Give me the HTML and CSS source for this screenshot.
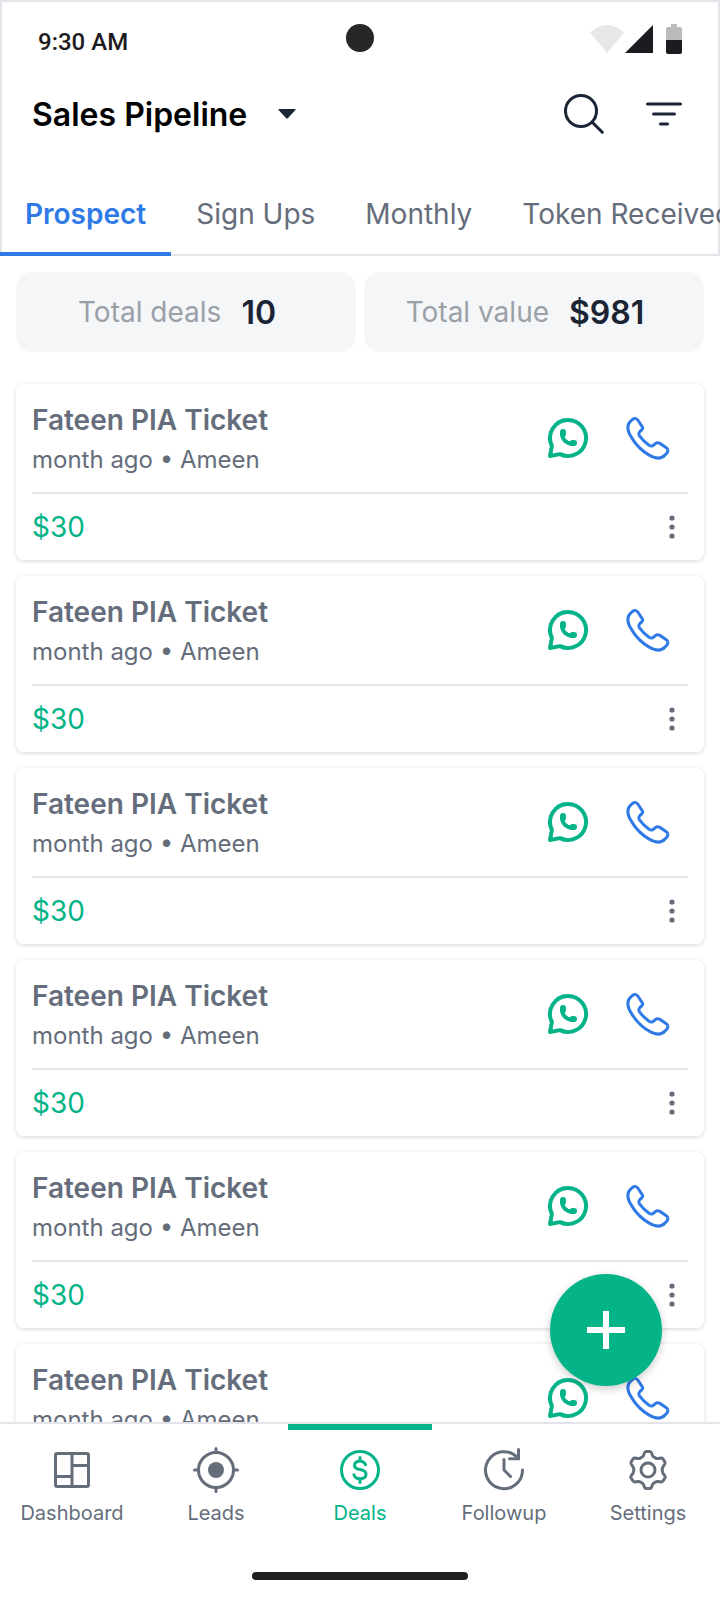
FILE: index.html
```html
<!DOCTYPE html>
<html lang="en">
<head>
    <meta charset="UTF-8">
    <meta name="viewport" content="width=device-width, initial-scale=1.0">
    <title>Sales Pipeline</title>
    <link rel="stylesheet" href="styles.css">
</head>
<body>
    <!-- Icons used more than once -->
    <svg class="sprite" aria-hidden="true">
        <symbol id="icon-whatsapp" viewBox="0 0 48 48">
            <path d="M24 6a18 18 0 1 1-8 34.100L6 42l1.900-10A18 18 0 0 1 24 6z" fill="none" stroke="currentColor" stroke-width="4" stroke-linejoin="round"/>
            <path d="M18 19C18 25.500 22.500 30 29 30" fill="none" stroke="currentColor" stroke-width="4" stroke-linecap="round"/>
            <path d="M19 18v2M28.500 29h1.500" fill="none" stroke="currentColor" stroke-width="6" stroke-linecap="round"/>
        </symbol>
        <symbol id="icon-phone" viewBox="0 0 48 48">
            <path d="M18.300 12.800L13.800 6Q11.400 3 8.500 5.500C3 9.500 2.500 14.500 6 21C11.500 31 18 37.500 27 42.200C33 45.300 38.500 44.500 42.500 39.500Q45.500 36 42 33.500L35.800 29.300Q33.300 28 31.300 29.600L29.700 31Q27.500 32.900 25 31.200Q19.100 26.800 15.500 21.800Q14.100 19.600 15.800 17.700L17.700 15.900Q19.300 14.500 18.300 12.800z" fill="none" stroke="currentColor" stroke-width="3" stroke-linejoin="round"/>
        </symbol>
        <symbol id="icon-dots" viewBox="0 0 8 24">
            <circle cx="4" cy="3" r="2.600" fill="currentColor"/>
            <circle cx="4" cy="12" r="2.600" fill="currentColor"/>
            <circle cx="4" cy="21" r="2.600" fill="currentColor"/>
        </symbol>
    </svg>

    <header class="top">
        <div class="status-bar">
            <span class="time">9:30 AM</span>
            <span class="camera"></span>
            <svg class="status-icons" width="92" height="30" viewBox="0 0 92 30" aria-hidden="true">
                <path d="M0 8.500Q17-6.500 34 8.500L17 29z" fill="#e7e7e7"/>
                <path d="M63 1v28H35z" fill="#1d1b20"/>
                <path d="M81 0h6v3h3q2 0 2 2v11H76V5q0-2 2-2h3z" fill="#bbb"/>
                <path d="M76 16h16v12q0 2-2 2H78q-2 0-2-2z" fill="#1d1b20"/>
            </svg>
        </div>

        <div class="title-bar">
            <div class="pipeline">
                <select class="pipeline-select" aria-label="Pipeline">
                    <option>Sales Pipeline</option>
                </select>
                <svg class="caret" width="18" height="10" viewBox="0 0 18 10" aria-hidden="true">
                    <path d="M1 0h16q1 0 .4 1L10 9q-1 1-2 0L.6 1Q0 0 1 0z" fill="currentColor"/>
                </svg>
            </div>
            <button class="icon-btn" aria-label="Search">
                <svg width="48" height="48" viewBox="0 0 48 48" fill="none" stroke="currentColor" stroke-width="3" stroke-linecap="round">
                    <circle cx="21" cy="21" r="15.500"/>
                    <path d="M32.500 32.500l9.800 9.800"/>
                </svg>
            </button>
            <button class="icon-btn" aria-label="Filter">
                <svg width="48" height="48" viewBox="0 0 48 48" fill="none" stroke="currentColor" stroke-width="3" stroke-linecap="round">
                    <path d="M7.500 14h33M13.500 24h21M20.500 34h7"/>
                </svg>
            </button>
        </div>

        <nav class="tabs">
            <a class="tab active" href="#prospect">Prospect</a>
            <a class="tab" href="#sign-ups">Sign Ups</a>
            <a class="tab" href="#monthly">Monthly</a>
            <a class="tab" href="#token-received">Token Received</a>
        </nav>
    </header>

    <main>
        <section class="totals">
            <div class="total"><span>Total deals</span><strong>10</strong></div>
            <div class="total"><span>Total value</span><strong>$981</strong></div>
        </section>

        <section class="deals">
            <article class="deal">
                <div class="deal-top">
                    <div class="deal-info">
                        <h2>Fateen PIA Ticket</h2>
                        <p>month ago • Ameen</p>
                    </div>
                    <a class="whatsapp" href="#whatsapp" aria-label="WhatsApp"><svg><use href="#icon-whatsapp"/></svg></a>
                    <a class="phone" href="#call" aria-label="Call"><svg><use href="#icon-phone"/></svg></a>
                </div>
                <div class="deal-bottom">
                    <span class="price">$30</span>
                    <button class="more" aria-label="More"><svg><use href="#icon-dots"/></svg></button>
                </div>
            </article>
            <article class="deal">
                <div class="deal-top">
                    <div class="deal-info">
                        <h2>Fateen PIA Ticket</h2>
                        <p>month ago • Ameen</p>
                    </div>
                    <a class="whatsapp" href="#whatsapp" aria-label="WhatsApp"><svg><use href="#icon-whatsapp"/></svg></a>
                    <a class="phone" href="#call" aria-label="Call"><svg><use href="#icon-phone"/></svg></a>
                </div>
                <div class="deal-bottom">
                    <span class="price">$30</span>
                    <button class="more" aria-label="More"><svg><use href="#icon-dots"/></svg></button>
                </div>
            </article>
            <article class="deal">
                <div class="deal-top">
                    <div class="deal-info">
                        <h2>Fateen PIA Ticket</h2>
                        <p>month ago • Ameen</p>
                    </div>
                    <a class="whatsapp" href="#whatsapp" aria-label="WhatsApp"><svg><use href="#icon-whatsapp"/></svg></a>
                    <a class="phone" href="#call" aria-label="Call"><svg><use href="#icon-phone"/></svg></a>
                </div>
                <div class="deal-bottom">
                    <span class="price">$30</span>
                    <button class="more" aria-label="More"><svg><use href="#icon-dots"/></svg></button>
                </div>
            </article>
            <article class="deal">
                <div class="deal-top">
                    <div class="deal-info">
                        <h2>Fateen PIA Ticket</h2>
                        <p>month ago • Ameen</p>
                    </div>
                    <a class="whatsapp" href="#whatsapp" aria-label="WhatsApp"><svg><use href="#icon-whatsapp"/></svg></a>
                    <a class="phone" href="#call" aria-label="Call"><svg><use href="#icon-phone"/></svg></a>
                </div>
                <div class="deal-bottom">
                    <span class="price">$30</span>
                    <button class="more" aria-label="More"><svg><use href="#icon-dots"/></svg></button>
                </div>
            </article>
            <article class="deal">
                <div class="deal-top">
                    <div class="deal-info">
                        <h2>Fateen PIA Ticket</h2>
                        <p>month ago • Ameen</p>
                    </div>
                    <a class="whatsapp" href="#whatsapp" aria-label="WhatsApp"><svg><use href="#icon-whatsapp"/></svg></a>
                    <a class="phone" href="#call" aria-label="Call"><svg><use href="#icon-phone"/></svg></a>
                </div>
                <div class="deal-bottom">
                    <span class="price">$30</span>
                    <button class="more" aria-label="More"><svg><use href="#icon-dots"/></svg></button>
                </div>
            </article>
            <article class="deal">
                <div class="deal-top">
                    <div class="deal-info">
                        <h2>Fateen PIA Ticket</h2>
                        <p>month ago • Ameen</p>
                    </div>
                    <a class="whatsapp" href="#whatsapp" aria-label="WhatsApp"><svg><use href="#icon-whatsapp"/></svg></a>
                    <a class="phone" href="#call" aria-label="Call"><svg><use href="#icon-phone"/></svg></a>
                </div>
                <div class="deal-bottom">
                    <span class="price">$30</span>
                    <button class="more" aria-label="More"><svg><use href="#icon-dots"/></svg></button>
                </div>
            </article>
        </section>
    </main>

    <footer class="bottom">
        <button class="fab" aria-label="Add deal">
            <svg width="38" height="38" viewBox="0 0 38 38" fill="none" stroke="currentColor" stroke-width="6">
                <path d="M19 0v38M0 19h38"/>
            </svg>
        </button>
        <nav class="bottom-nav">
            <a class="nav-item" href="#dashboard">
                <svg viewBox="0 0 48 48" fill="none" stroke="currentColor" stroke-width="3">
                    <rect x="7.500" y="7.500" width="33" height="33" rx="1.500"/>
                    <path d="M24 7v34M24 19.500h17M7 30.500h17"/>
                </svg>
                Dashboard
            </a>
            <a class="nav-item" href="#leads">
                <svg viewBox="0 0 48 48" fill="none" stroke="currentColor" stroke-width="3" stroke-linecap="round">
                    <circle cx="24" cy="24" r="17.500"/>
                    <circle cx="24" cy="24" r="8" fill="currentColor" stroke="none"/>
                    <path d="M24 2.500v4M24 41.500v4M2.500 24h4M41.500 24h4"/>
                </svg>
                Leads
            </a>
            <a class="nav-item active" href="#deals">
                <svg viewBox="0 0 48 48" fill="none" stroke="currentColor" stroke-width="3" stroke-linecap="round">
                    <circle cx="24" cy="24" r="18.500"/>
                    <path d="M29.500 18.800C28.700 16.300 26.800 15.200 24 15.200C20.600 15.200 18.500 16.900 18.500 19.400C18.500 25.500 30 21.500 30 28C30 31 27.500 32.700 24 32.700C20.800 32.700 18.700 31.500 18 28.800"/>
                    <path d="M24 11.500v3M24 33.500v3"/>
                </svg>
                Deals
            </a>
            <a class="nav-item" href="#followup">
                <svg viewBox="0 0 48 48" fill="none" stroke="currentColor" stroke-width="3" stroke-linecap="round">
                    <path d="M42.500 24A18.500 18.500 0 1 1 37 11"/>
                    <path d="M38.500 3.500v9.200H29.500M24 13.500V24l6.500 6.500"/>
                </svg>
                Followup
            </a>
            <a class="nav-item" href="#settings">
                <svg viewBox="0 0 48 48" fill="none" stroke="currentColor" stroke-width="3" stroke-linejoin="round">
                    <circle cx="24" cy="24" r="7"/>
                    <path d="M24 5.500H25.600Q27.100 5.500 27.600 7L28.400 9.200Q29.100 11 31.100 11.700Q32.800 12.900 34.500 12.500L37 12.100Q38.500 12 39.300 13.400L40.900 16Q41.600 17.400 40.600 18.600L39.200 20.300Q38.200 22 38.200 24Q38.200 26 39.200 27.700L40.600 29.400Q41.600 30.600 40.900 32L39.300 34.600Q38.500 36 37 35.900L34.500 35.500Q32.800 35.100 31.100 36.300Q29.100 37 28.400 38.800L27.600 41Q27.100 42.500 25.600 42.500H22.400Q20.900 42.500 20.400 41L19.600 38.800Q18.900 37 16.900 36.300Q15.200 35.100 13.500 35.500L11 35.900Q9.500 36 8.700 34.600L7.100 32Q6.400 30.600 7.400 29.400L8.800 27.700Q9.800 26 9.800 24Q9.800 22 8.800 20.300L7.400 18.600Q6.400 17.400 7.100 16L8.700 13.400Q9.500 12 11 12.100L13.500 12.500Q15.200 12.900 16.900 11.700Q18.900 11 19.600 9.200L20.400 7Q20.900 5.500 22.400 5.500z"/>
                </svg>
                Settings
            </a>
        </nav>
        <div class="home-indicator"></div>
    </footer>
</body>
</html>
```

FILE: styles.css
```css
* {
    box-sizing: border-box;
}

body {
    margin: 0;
    height: 100vh;
    display: flex;
    flex-direction: column;
    overflow: hidden;
    font-family: Inter, "Liberation Sans", sans-serif;
    color: #656d7b;
    background: #fff;
}

a {
    color: inherit;
    text-decoration: none;
}

button {
    padding: 0;
    border: none;
    background: none;
    color: inherit;
    cursor: pointer;
}

svg {
    display: block;
}

.sprite {
    position: absolute;
    width: 0;
    height: 0;
}

/* Header */
.top {
    border: 2px solid #e4e4ea;
}

.status-bar {
    display: grid;
    grid-template-columns: 1fr auto 1fr;
    align-items: center;
    height: 76px;
    padding: 0 36px 2px;
}

.time {
    font-family: Roboto, sans-serif;
    font-size: 24px;
    font-weight: 500;
    line-height: 28px;
    padding-top: 6px;
    color: #1d1b20;
}

.camera {
    width: 28px;
    height: 28px;
    margin-bottom: 2px;
    border-radius: 50%;
    background: #272728;
}

.status-icons {
    justify-self: end;
}

.title-bar {
    display: flex;
    align-items: center;
    gap: 32px;
    height: 72px;
    padding: 0 30px;
    color: #1a2434;
}

.pipeline {
    display: flex;
    align-items: center;
    margin-right: auto;
}

.pipeline-select {
    appearance: none;
    padding: 2px 50px 0 0;
    margin-right: -20px;
    border: none;
    background: none;
    font-family: inherit;
    font-size: 32px;
    font-weight: 600;
    line-height: 40px;
    color: #000;
}

.caret {
    pointer-events: none;
}

.icon-btn {
    width: 48px;
    height: 48px;
}

.tabs {
    display: flex;
    height: 106px;
    margin: 0 -2px -2px;
    overflow: hidden;
    align-items: flex-end;
}

.tab {
    padding: 0 25px 20px;
    border-bottom: 4px solid transparent;
    font-size: 28px;
    line-height: 36px;
    white-space: nowrap;
}

.tab.active {
    border-color: #2f7ae5;
    color: #2f7ae5;
    font-weight: 600;
}

/* Deals */
main {
    flex: 1;
    min-height: 0;
    padding: 16px;
    overflow: hidden;
}

.totals {
    display: grid;
    grid-template-columns: 1fr 1fr;
    gap: 8px;
    margin-bottom: 32px;
}

.total {
    display: flex;
    align-items: center;
    justify-content: center;
    gap: 20px;
    height: 80px;
    padding-right: 18px;
    border-radius: 16px;
    background: #f5f6f8;
    font-size: 28px;
    color: #9aa0a8;
}

.total strong {
    font-size: 32px;
    font-weight: 600;
    color: #1a2434;
}

.deals {
    display: flex;
    flex-direction: column;
    gap: 16px;
}

.deal {
    padding: 0 16px;
    border-radius: 8px;
    background: #fff;
    box-shadow: 0 1px 4px rgba(0, 0, 0, 0.16);
}

.deal-top {
    display: flex;
    align-items: center;
    gap: 32px;
    height: 110px;
    padding: 0 16px 0 0;
    border-bottom: 2px solid #e4e4ea;
}

.deal-info {
    flex: 1;
    padding-top: 4px;
}

.deal h2 {
    margin: 0;
    font-size: 28px;
    font-weight: 600;
    line-height: 40px;
}

.deal p {
    margin: 0;
    font-size: 24px;
    line-height: 40px;
}

.deal-top svg {
    width: 48px;
    height: 48px;
}

.whatsapp,
.price {
    color: #04b488;
}

.phone {
    color: #2f7ae5;
}

.deal-bottom {
    display: flex;
    align-items: center;
    justify-content: space-between;
    height: 66px;
}

.price {
    font-size: 28px;
}

.more {
    padding: 8px 12px;
}

.more svg {
    width: 8px;
    height: 24px;
}

/* Bottom bar */
.bottom {
    position: relative;
    border-top: 2px solid #e4e4ea;
    background: #fff;
}

.fab {
    position: absolute;
    right: 58px;
    bottom: 100%;
    margin-bottom: 38px;
    width: 112px;
    height: 112px;
    display: grid;
    place-items: center;
    border-radius: 50%;
    background: #04b488;
    color: #fff;
    box-shadow: 0 3px 8px rgba(0, 0, 0, 0.2);
}

.bottom-nav {
    display: grid;
    grid-template-columns: repeat(5, 1fr);
}

.nav-item {
    display: flex;
    flex-direction: column;
    align-items: center;
    gap: 4px;
    padding: 16px 0;
    border-top: 6px solid transparent;
    font-size: 20px;
    line-height: 30px;
}

.nav-item.active {
    border-color: #04b488;
    color: #04b488;
}

.nav-item svg {
    width: 48px;
    height: 48px;
}

.home-indicator {
    width: 30%;
    height: 8px;
    margin: 28px auto 20px;
    border-radius: 4px;
    background: #202124;
}
```
